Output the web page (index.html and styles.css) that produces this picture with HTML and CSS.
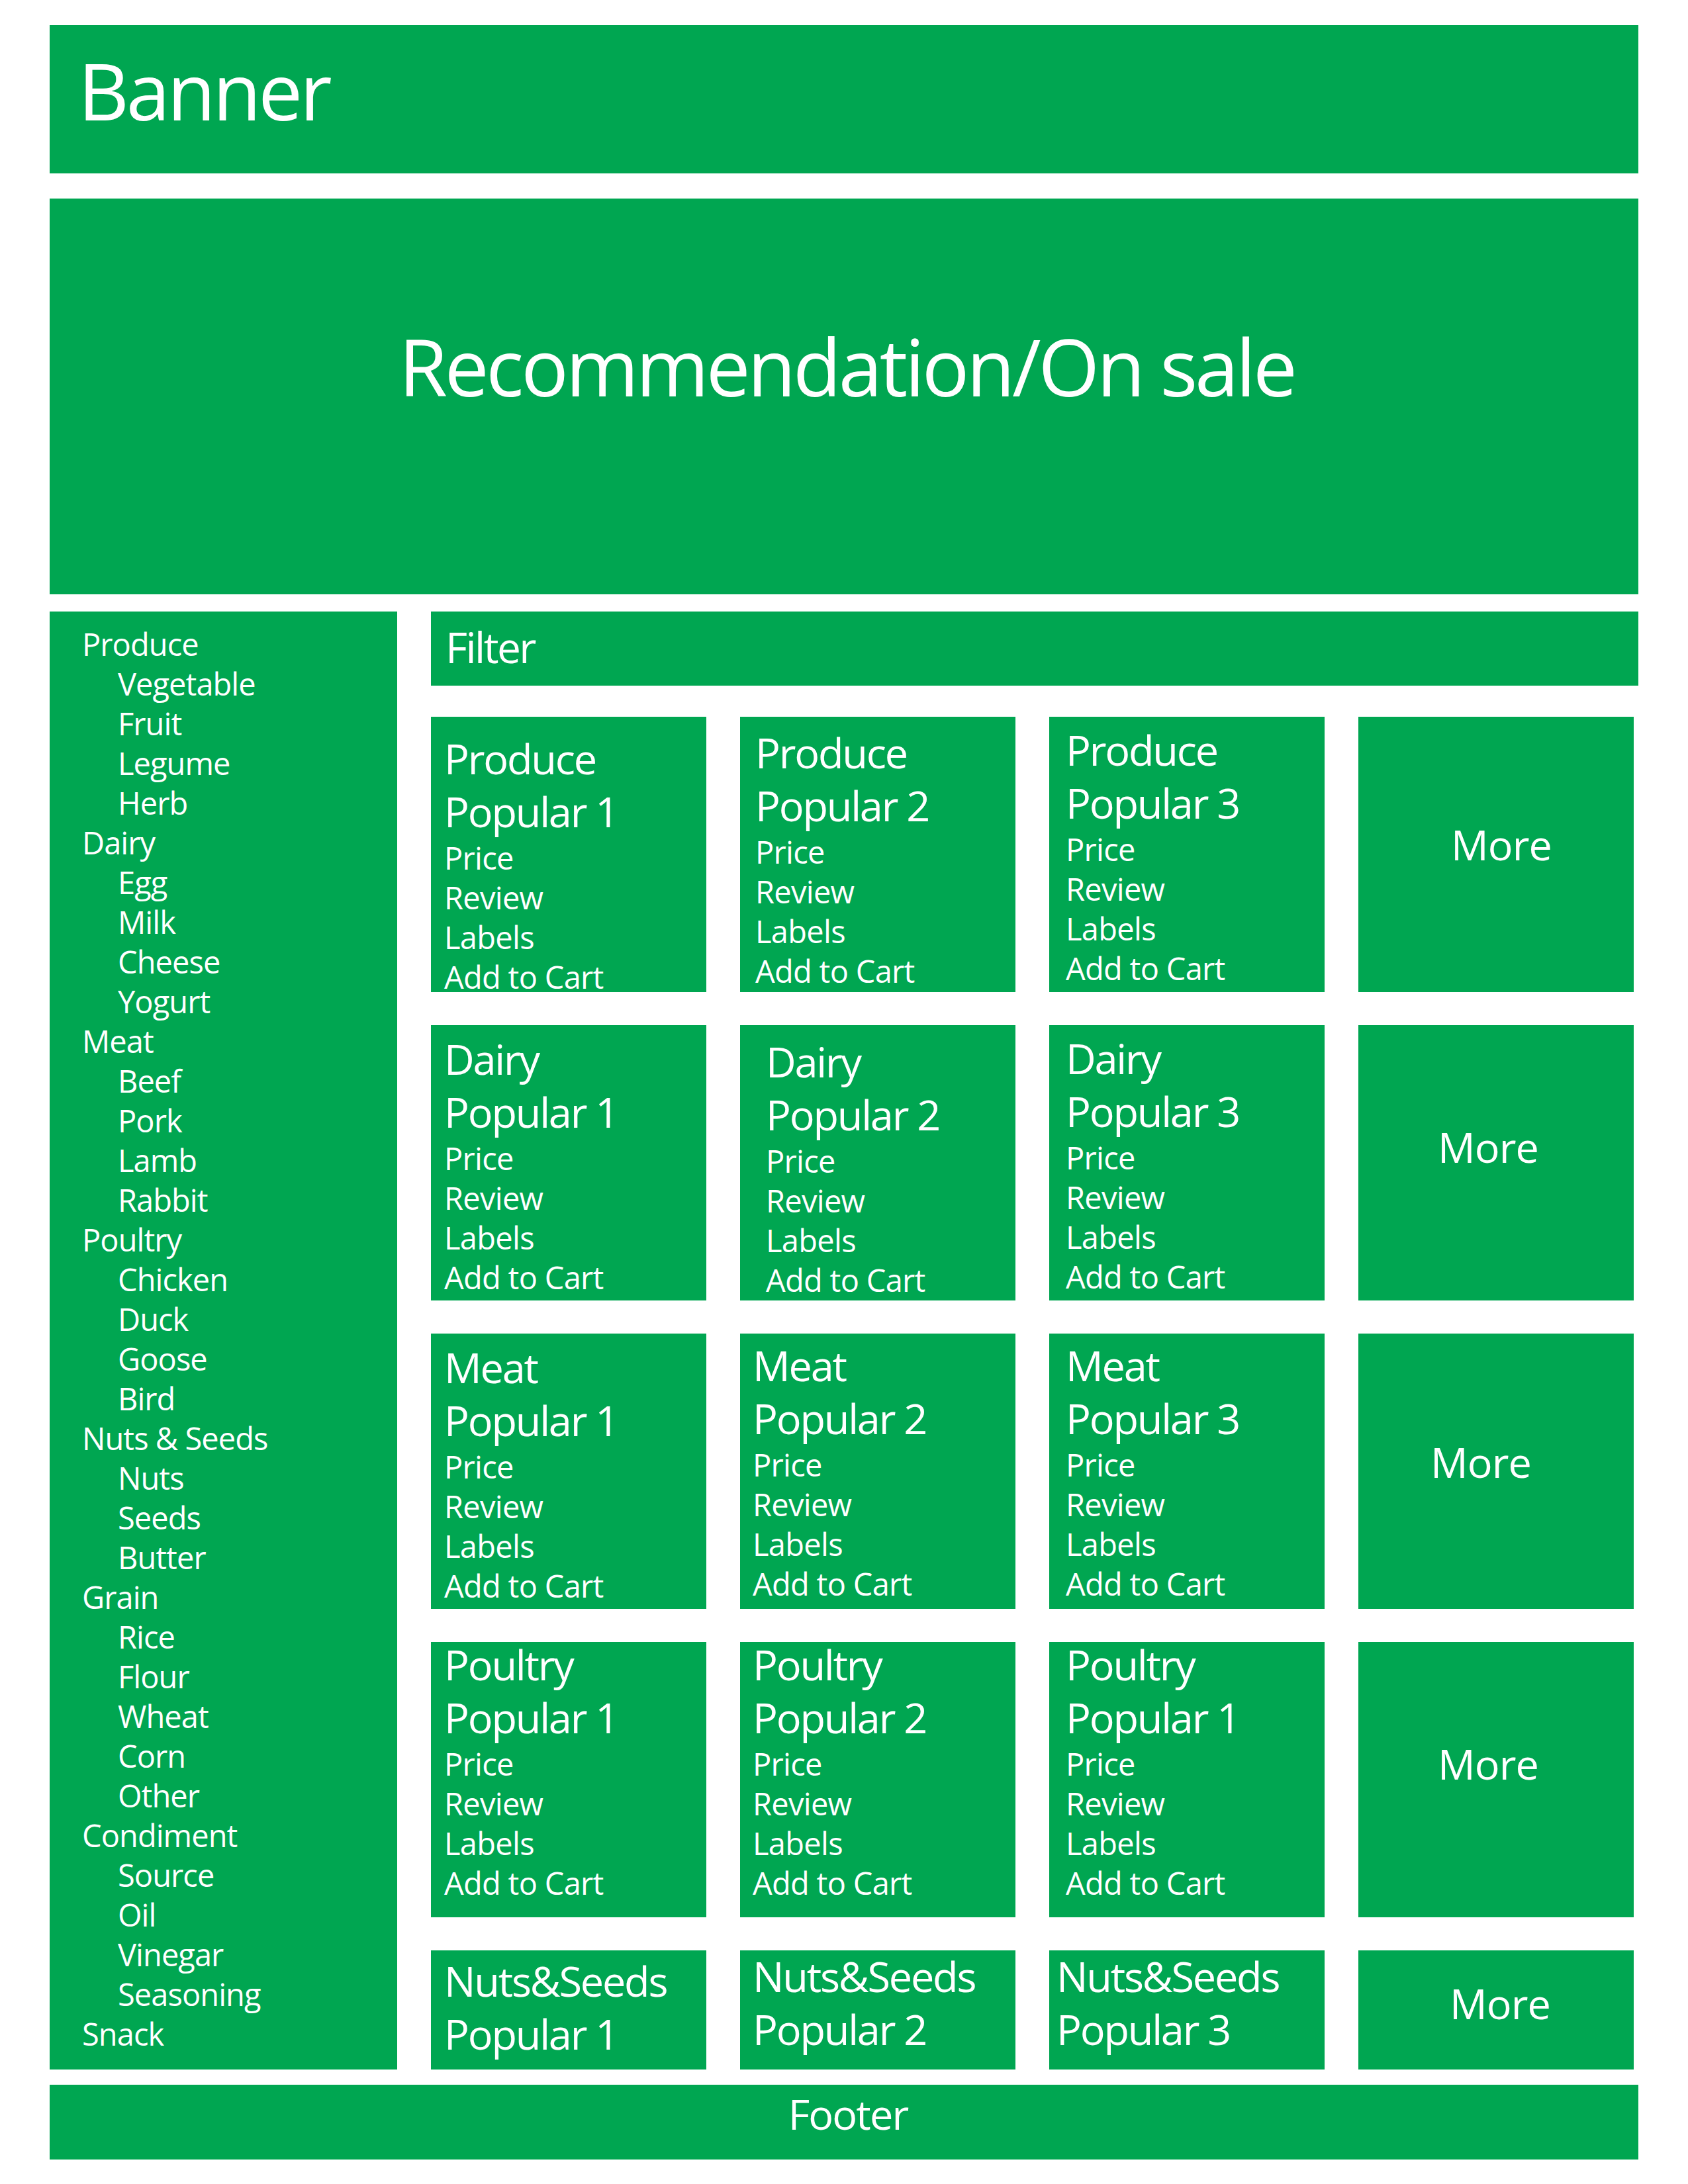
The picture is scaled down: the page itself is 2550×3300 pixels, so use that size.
FILE: index.html
```html
<!DOCTYPE html>
<html lang="en">
<head>
<meta charset="utf-8">
<title>Grocery store layout</title>
<link rel="stylesheet" href="styles.css">
</head>
<body>
<div class="page">
  <header class="banner">Banner</header>
  <section class="hero">Recommendation/On sale</section>
  <div class="main">
    <nav class="sidebar">
      <ul class="cats">
        <li class="cat">Produce</li>
        <li class="sub">Vegetable</li>
        <li class="sub">Fruit</li>
        <li class="sub">Legume</li>
        <li class="sub">Herb</li>
        <li class="cat">Dairy</li>
        <li class="sub">Egg</li>
        <li class="sub">Milk</li>
        <li class="sub">Cheese</li>
        <li class="sub">Yogurt</li>
        <li class="cat">Meat</li>
        <li class="sub">Beef</li>
        <li class="sub">Pork</li>
        <li class="sub">Lamb</li>
        <li class="sub">Rabbit</li>
        <li class="cat">Poultry</li>
        <li class="sub">Chicken</li>
        <li class="sub">Duck</li>
        <li class="sub">Goose</li>
        <li class="sub">Bird</li>
        <li class="cat">Nuts &amp; Seeds</li>
        <li class="sub">Nuts</li>
        <li class="sub">Seeds</li>
        <li class="sub">Butter</li>
        <li class="cat">Grain</li>
        <li class="sub">Rice</li>
        <li class="sub">Flour</li>
        <li class="sub">Wheat</li>
        <li class="sub">Corn</li>
        <li class="sub">Other</li>
        <li class="cat">Condiment</li>
        <li class="sub">Source</li>
        <li class="sub">Oil</li>
        <li class="sub">Vinegar</li>
        <li class="sub">Seasoning</li>
        <li class="cat">Snack</li>
      </ul>
    </nav>
    <div class="content">
      <div class="filter">Filter</div>
      <div class="grid">
        <!-- Row 1 -->
        <div class="card t25 x20">
          <div class="name">Produce</div><div class="pop">Popular 1</div>
          <div class="line">Price</div><div class="line">Review</div><div class="line">Labels</div><div class="line">Add to Cart</div>
        </div>
        <div class="card t16 x23">
          <div class="name">Produce</div><div class="pop">Popular 2</div>
          <div class="line">Price</div><div class="line">Review</div><div class="line">Labels</div><div class="line">Add to Cart</div>
        </div>
        <div class="card t12 x25">
          <div class="name">Produce</div><div class="pop">Popular 3</div>
          <div class="line">Price</div><div class="line">Review</div><div class="line">Labels</div><div class="line">Add to Cart</div>
        </div>
        <div class="more m1">More</div>

        <!-- Row 2 -->
        <div class="card t13 x20">
          <div class="name">Dairy</div><div class="pop">Popular 1</div>
          <div class="line">Price</div><div class="line">Review</div><div class="line">Labels</div><div class="line">Add to Cart</div>
        </div>
        <div class="card t17 x39">
          <div class="name">Dairy</div><div class="pop">Popular 2</div>
          <div class="line">Price</div><div class="line">Review</div><div class="line">Labels</div><div class="line">Add to Cart</div>
        </div>
        <div class="card t12 x25">
          <div class="name">Dairy</div><div class="pop">Popular 3</div>
          <div class="line">Price</div><div class="line">Review</div><div class="line">Labels</div><div class="line">Add to Cart</div>
        </div>
        <div class="more m2">More</div>

        <!-- Row 3 -->
        <div class="card t13 x20">
          <div class="name">Meat</div><div class="pop">Popular 1</div>
          <div class="line">Price</div><div class="line">Review</div><div class="line">Labels</div><div class="line">Add to Cart</div>
        </div>
        <div class="card t10 x19">
          <div class="name">Meat</div><div class="pop">Popular 2</div>
          <div class="line">Price</div><div class="line">Review</div><div class="line">Labels</div><div class="line">Add to Cart</div>
        </div>
        <div class="card t10 x25">
          <div class="name">Meat</div><div class="pop">Popular 3</div>
          <div class="line">Price</div><div class="line">Review</div><div class="line">Labels</div><div class="line">Add to Cart</div>
        </div>
        <div class="more m3">More</div>

        <!-- Row 4 -->
        <div class="card tn4 x20">
          <div class="name">Poultry</div><div class="pop">Popular 1</div>
          <div class="line">Price</div><div class="line">Review</div><div class="line">Labels</div><div class="line">Add to Cart</div>
        </div>
        <div class="card tn4 x19">
          <div class="name">Poultry</div><div class="pop">Popular 2</div>
          <div class="line">Price</div><div class="line">Review</div><div class="line">Labels</div><div class="line">Add to Cart</div>
        </div>
        <div class="card tn4 x25">
          <div class="name">Poultry</div><div class="pop">Popular 1</div>
          <div class="line">Price</div><div class="line">Review</div><div class="line">Labels</div><div class="line">Add to Cart</div>
        </div>
        <div class="more m4">More</div>

        <!-- Row 5 -->
        <div class="card t6 x20">
          <div class="name">Nuts&amp;Seeds</div><div class="pop">Popular 1</div>
        </div>
        <div class="card tn1 x19">
          <div class="name">Nuts&amp;Seeds</div><div class="pop">Popular 2</div>
        </div>
        <div class="card tn1 x11">
          <div class="name">Nuts&amp;Seeds</div><div class="pop">Popular 3</div>
        </div>
        <div class="more m5">More</div>
      </div>
    </div>
  </div>
  <footer class="footer">Footer</footer>
</div>
</body>
</html>
```

FILE: styles.css
```css
* {
  box-sizing: border-box;
}

html, body {
  margin: 0;
  padding: 0;
  background: #ffffff;
}

body {
  font-family: "Open Sans", "Noto Sans", "DejaVu Sans", sans-serif;
  color: #ffffff;
  font-weight: 400;
}

.page {
  width: 2550px;
  height: 3300px;
  padding: 38px 75px 0 75px;
  display: flex;
  flex-direction: column;
}

.banner {
  background: #00a651;
  height: 224px;
  padding: 39px 0 0 43px;
  font-size: 119px;
  line-height: 1;
  letter-spacing: -0.035em;
}

.hero {
  margin-top: 38px;
  background: #00a651;
  height: 598px;
  padding-top: 194px;
  padding-left: 8px;
  text-align: center;
  font-size: 119px;
  line-height: 1;
  letter-spacing: -0.035em;
}

.main {
  margin-top: 26px;
  display: flex;
  gap: 51px;
  align-items: stretch;
}

.sidebar {
  width: 525px;
  flex: none;
  background: #00a651;
  padding: 19px 0 0 49px;
}

.cats {
  list-style: none;
  margin: 0;
  padding: 0;
  font-size: 47px;
  line-height: 60px;
  letter-spacing: -0.02em;
}

.cat {
  padding-left: 0;
}

.sub {
  padding-left: 54px;
}

.content {
  flex: 1;
  display: flex;
  flex-direction: column;
}

.filter {
  background: #00a651;
  height: 112px;
  padding: 22px 0 0 22px;
  font-size: 64px;
  line-height: 1;
  letter-spacing: -0.04em;
}

.grid {
  margin-top: 47px;
  display: grid;
  grid-template-columns: repeat(4, 416px);
  grid-template-rows: repeat(4, 416px) 180px;
  column-gap: 51px;
  row-gap: 50px;
}

.card {
  background: #00a651;
  padding-left: var(--px, 20px);
  white-space: nowrap;
}

.name,
.pop {
  font-size: 63px;
  line-height: 80px;
  letter-spacing: -0.035em;
}

.name {
  margin-top: var(--dy, 11px);
}

.line {
  font-size: 47px;
  line-height: 60px;
  letter-spacing: -0.015em;
}

/* title vertical offsets */
.t25 { --dy: 23px; }
.t17 { --dy: 15px; }
.t16 { --dy: 14px; }
.t13 { --dy: 11px; }
.t12 { --dy: 10px; }
.t10 { --dy: 8px; }
.t6  { --dy: 6px; }
.tn1 { --dy: -1px; }
.tn4 { --dy: -6px; }

/* text horizontal offsets */
.x11 { --px: 11px; }
.x19 { --px: 19px; }
.x20 { --px: 20px; }
.x23 { --px: 23px; }
.x25 { --px: 25px; }
.x39 { --px: 39px; }

.more {
  background: #00a651;
  display: flex;
  justify-content: center;
  align-items: flex-start;
  font-size: 63px;
  line-height: 80px;
  letter-spacing: -0.015em;
}

.m1 { padding-top: 153px; padding-left: 16px; }
.m2 { padding-top: 144px; padding-right: 24px; }
.m3 { padding-top: 154px; padding-right: 46px; }
.m4 { padding-top: 144px; padding-right: 24px; }
.m5 { padding-top: 40px; padding-left: 12px; }

.footer {
  margin-top: 23px;
  background: #00a651;
  height: 113px;
  padding-top: 12px;
  padding-left: 12px;
  text-align: center;
  font-size: 63px;
  line-height: 1;
  letter-spacing: -0.03em;
}
```
